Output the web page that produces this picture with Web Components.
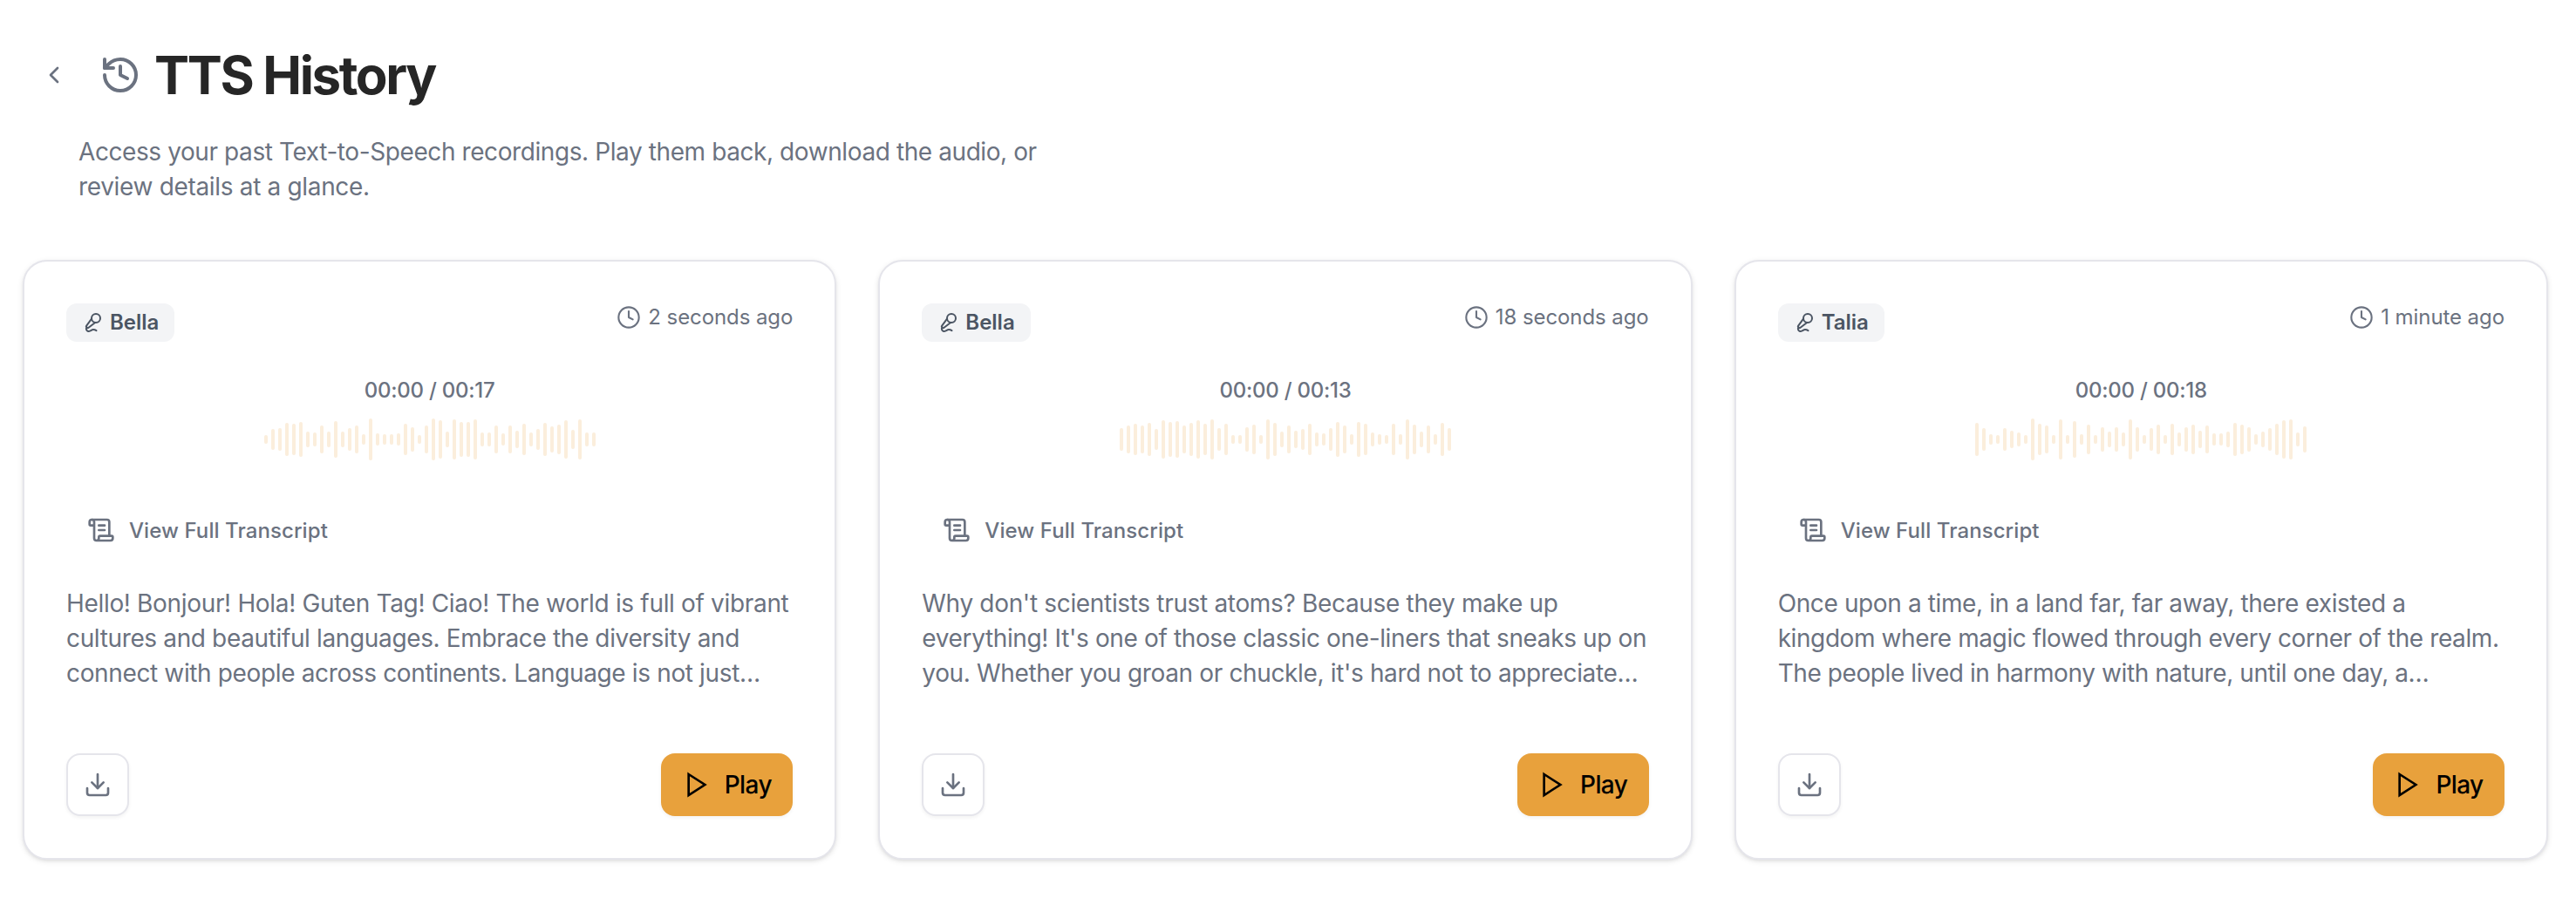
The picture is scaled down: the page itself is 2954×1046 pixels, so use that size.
<!DOCTYPE html>
<html lang="en">
<head>
<meta charset="utf-8">
<title>TTS History</title>
<style>
body{margin:0;background:#fff;font-family:Inter,"Liberation Sans",sans-serif;color:#6b7280}
.w1{letter-spacing:-.33px}
.w2{letter-spacing:-.36px}
.w3{letter-spacing:-.41px}
</style>
</head>
<body>
<tts-page>
  <page-header heading="TTS History">Access your past Text-to-Speech recordings. Play them back, download the audio, or<br><span class="w1">review details at a glance.</span></page-header>
  <recording-card voice="Bella" age="2 seconds ago" length="00:17" bars="10,24,26,38,36,40,18,16,32,18,42,18,26,32,12,48,14,12,12,14,36,28,10,32,48,44,18,46,40,40,46,16,16,32,14,32,20,36,16,24,38,30,34,44,22,46,16,16"><span class="w1">Hello! Bonjour! Hola! Guten Tag! Ciao! The world is full of vibrant</span><br><span class="w2">cultures and beautiful languages. Embrace the diversity and</span><br><span class="w2">connect with people across continents. Language is not just…</span></recording-card>
  <recording-card voice="Bella" age="18 seconds ago" length="00:13" bars="26,32,36,32,38,24,44,40,42,32,38,44,36,46,26,36,10,10,28,34,10,46,38,18,32,20,24,36,16,14,26,40,32,12,40,36,16,12,10,36,12,46,34,18,32,12,38,26"><span class="w1">Why don't scientists trust atoms? Because they make up</span><br><span class="w2">everything! It's one of those classic one-liners that sneaks up on</span><br><span class="w2">you. Whether you groan or chuckle, it's hard not to appreciate…</span></recording-card>
  <recording-card voice="Talia" age="1 minute ago" length="00:18" bars="38,26,12,10,26,20,16,10,48,36,32,10,46,10,42,12,34,10,28,18,28,16,46,28,10,26,34,10,36,16,28,34,20,32,14,14,18,38,34,28,12,18,26,36,44,46,16,30"><span>Once upon a time, in a land far, far away, there existed a</span><br><span class="w3">kingdom where magic flowed through every corner of the realm.</span><br><span class="w3">The people lived in harmony with nature, until one day, a…</span></recording-card>
</tts-page>
<script>
const ICONS = {
  back: '<path d="m15 18-6-6 6-6"/>',
  history: '<path d="M3 12a9 9 0 1 0 9-9 9.75 9.75 0 0 0-6.74 2.74L3 8"/><path d="M3 3v5h5"/><path d="M12 7v5l4 2"/>',
  mic: '<path d="m11 7.601-5.994 8.19a1 1 0 0 0 .1 1.298l.817.818a1 1 0 0 0 1.314.087L15.09 12"/><path d="M16.5 21.174C15.5 20.5 14.372 20 13 20c-2.058 0-3.928 2.356-6 2-2.072-.356-2.775-3.369-1.5-4.5"/><circle cx="16" cy="7" r="5"/>',
  clock: '<circle cx="12" cy="12" r="10"/><path d="M12 6v6l4 2"/>',
  scroll: '<path d="M15 12h-5"/><path d="M15 8h-5"/><path d="M19 17V5a2 2 0 0 0-2-2H4"/><path d="M8 21h12a2 2 0 0 0 2-2v-1a1 1 0 0 0-1-1H11a1 1 0 0 0-1 1v1a2 2 0 1 1-4 0V5a2 2 0 1 0-4 0v2a1 1 0 0 0 1 1h3"/>',
  download: '<path d="M21 15v4a2 2 0 0 1-2 2H5a2 2 0 0 1-2-2v-4"/><path d="m7 10 5 5 5-5"/><path d="M12 15V3"/>',
  play: '<path stroke-linejoin="miter" d="m5 3 14 9-14 9z"/>'
};

class Base extends HTMLElement {
  connectedCallback() {
    if (this.shadowRoot) return;
    this.attachShadow({ mode: 'open' }).innerHTML = this.render();
  }
  attr(n) { return this.getAttribute(n) || ''; }
}

customElements.define('line-icon', class extends Base {
  render() {
    const s = this.attr('size');
    return `<style>:host{display:block;flex:none;width:${s}px;height:${s}px}svg{display:block}</style>
      <svg width="${s}" height="${s}" viewBox="0 0 24 24" fill="none" stroke="currentColor" stroke-width="${this.attr('weight') || 2}" stroke-linecap="round" stroke-linejoin="round">${ICONS[this.attr('name')]}</svg>`;
  }
});

customElements.define('tts-page', class extends Base {
  render() {
    return `<style>
      :host{display:grid;grid-template-columns:repeat(3,minmax(0,1fr));column-gap:48px;padding:46px 32px 0 26px;height:1046px;box-sizing:border-box;align-content:start}
      ::slotted(page-header){grid-column:1/-1}
    </style><slot></slot>`;
  }
});

customElements.define('page-header', class extends Base {
  render() {
    return `<style>
      :host{display:block;height:252px}
      .top{display:flex;align-items:center;height:80px;padding-left:20px}
      line-icon + line-icon{margin-left:36px}
      h1{margin:0 0 0 15px;font-size:60px;line-height:72px;font-weight:700;letter-spacing:-2.35px;color:#262626;white-space:nowrap}
      p{margin:28px 0 0 64px;font-size:28px;line-height:40px;letter-spacing:-.41px;white-space:nowrap}
    </style>
    <div class="top"><line-icon name="back" size="32"></line-icon><line-icon name="history" size="48"></line-icon><h1>${this.attr('heading')}</h1></div>
    <p><slot></slot></p>`;
  }
});

customElements.define('voice-badge', class extends Base {
  render() {
    return `<style>:host{display:flex;align-items:center;gap:8px;height:44px;padding:0 18px;border-radius:12px;background:#f3f4f6;color:#4b5563;font-size:24px;line-height:32px;font-weight:600;white-space:nowrap}</style>
      <line-icon name="mic" size="24"></line-icon><span><slot></slot></span>`;
  }
});

customElements.define('wave-form', class extends Base {
  render() {
    return `<style>:host{display:flex;align-items:center;justify-content:center;gap:4px;height:64px}i{width:4px;border-radius:2px;background:#fbeedc}</style>`
      + this.attr('bars').split(',').map(h => `<i style="height:${h}px"></i>`).join('');
  }
});

customElements.define('recording-card', class extends Base {
  render() {
    return `<style>
      :host{display:flex;flex-direction:column;box-sizing:border-box;height:688px;padding:48px;border:2px solid #e5e5eb;border-radius:28px;background:#fff;box-shadow:0 2px 6px rgba(0,0,0,.1),0 2px 4px -2px rgba(0,0,0,.1)}
      .row{display:flex;justify-content:space-between;align-items:flex-start}
      .age{display:flex;align-items:center;gap:8px;height:32px;font-size:24px;line-height:32px;letter-spacing:-.08px;white-space:nowrap}
      .time{margin-top:40px;font-size:24px;line-height:32px;font-weight:500;letter-spacing:-.25px;text-align:center}
      wave-form{margin-top:8px}
      .view{display:flex;align-items:center;gap:16px;height:64px;margin-top:40px;padding-left:24px;font-size:24px;font-weight:500;letter-spacing:.08px}
      p{margin:32px 0 0;font-size:28px;line-height:40px;letter-spacing:-.38px;white-space:nowrap}
      .foot{margin-top:auto}
      button{display:flex;align-items:center;justify-content:center;height:72px;box-sizing:border-box;border-radius:16px;margin:0;font:500 28px/40px Inter,"Liberation Sans",sans-serif;box-shadow:0 2px 4px rgba(0,0,0,.05)}
      .dl{width:72px;padding:0;border:2px solid #e5e5eb;background:#fff;color:#6b7280}
      .play{gap:16px;width:151px;padding:0 24px;border:0;background:#e8a13c;color:#000;letter-spacing:-.6px}
    </style>
    <div class="row"><voice-badge>${this.attr('voice')}</voice-badge><div class="age"><line-icon name="clock" size="28" weight="1.8"></line-icon><span>${this.attr('age')}</span></div></div>
    <div class="time">00:00 / ${this.attr('length')}</div>
    <wave-form bars="${this.attr('bars')}"></wave-form>
    <div class="view"><line-icon name="scroll" size="32"></line-icon><span>View Full Transcript</span></div>
    <p><slot></slot></p>
    <div class="row foot"><button class="dl" aria-label="Download"><line-icon name="download" size="32"></line-icon></button><button class="play"><line-icon name="play" size="32"></line-icon><span>Play</span></button></div>`;
  }
});
</script>
</body>
</html>
